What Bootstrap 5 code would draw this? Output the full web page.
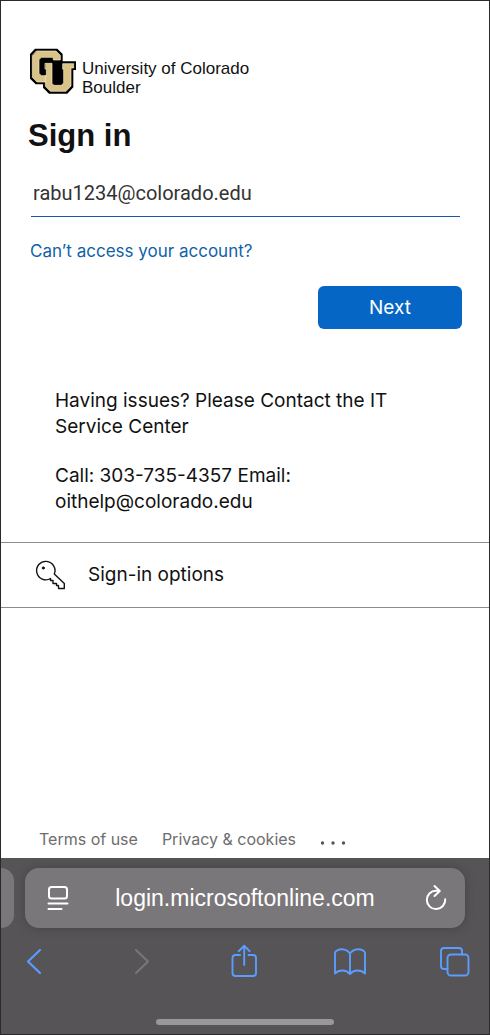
<!DOCTYPE html>
<html lang="en">
<head>
<meta charset="utf-8">
<meta name="viewport" content="width=device-width, initial-scale=1">
<title>Sign in</title>
<link href="https://cdn.jsdelivr.net/npm/bootstrap@5.3.0/dist/css/bootstrap.min.css" rel="stylesheet">
<style>
  body { font-family: Inter, Roboto, sans-serif; color: #111; background: #fff; }
  .phone { border: 1px solid #2b292b; }
  .signin { padding: 47px 27px 0 28px; }
  .brand-row { gap: 5px; }
  .brand-name { font: 17px/19px "Liberation Sans", Arial, sans-serif; padding-top: 11px; }
  h1 { font: bold 31px/36px "Liberation Sans", Arial, sans-serif; margin: 21px 0 0 -1px; }
  .user-field { font: 20px/24px Roboto, sans-serif; color: #333; border: 0; border-bottom: 1px solid #1a57a5; border-radius: 0; padding: 12px 2px 11px; margin: 15px 2px 0; width: calc(100% - 4px); }
  .recover { font-size: 17px; line-height: 24px; color: #0f62a8; margin: 22px 0 0 1px; }
  .next-btn { width: 144px; height: 43px; background: #0566c6; border: 0; border-radius: 6px; font-size: 19px; line-height: 24px; color: #fff; margin-top: 23px; }
  .next-btn:hover { background: #0459ad; }
  .help { font-size: 19px; line-height: 26px; padding: 59px 72px 0 54px; }
  .help p { margin: 0 0 23px; }
  .options { border: 0; border-top: 1px solid #8c8c8c; border-bottom: 1px solid #8c8c8c; border-radius: 0; font-size: 19px; line-height: 26px; color: #111; padding: 17px 34px; margin-top: 4px; gap: 22px; }
  .legal { font-size: 16px; line-height: 20px; color: #6d6d6d; padding: 0 38px 9px; gap: 24px; }
  .legal a { color: inherit; }
  .more { border: 0; background: none; padding: 0; color: #555; }
  .browser { background: #565456; padding: 10px 0 9px; }
  .tabs-row { gap: 11px; padding-right: 24px; }
  .tab-edge { width: 13px; height: 60px; background: #7a777a; border-radius: 0 14px 14px 0; }
  .address { height: 60px; background: #7a777a; border-radius: 14px; color: #fff; padding: 0 17px 0 21px; box-shadow: 0 0 8px #454346; }
  .address input { font: 23px/28px "Liberation Sans", Arial, sans-serif; color: #fff; background: none; border: 0; min-width: 0; text-align: center; outline: 0; padding: 0 4px 0 0; }
  .icon-btn { background: none; border: 0; padding: 0; line-height: 0; color: #5b9cff; }
  .icon-btn:disabled { color: #777579; }
  .address .icon-btn { color: #fff; }
  .toolbar { padding: 16px 18px 0; }
  .home-bar { width: 178px; height: 6px; border-radius: 3px; background: #9a979b; margin: 41px auto 0; }
  svg { fill: none; stroke: currentColor; stroke-linecap: round; stroke-linejoin: round; }
  .gold path { fill: #d9c386; stroke: #f4ebcd; stroke-width: 2; }
</style>
</head>
<body>
<div class="phone min-vh-100 d-flex flex-column">
  <main class="flex-grow-1 d-flex flex-column">
    <form class="signin">
      <div class="brand-row d-flex align-items-start">
        <svg width="48" height="48" viewBox="9 11 144 144" role="img" aria-label="CU Boulder logo" class="flex-shrink-0">
          <path fill="#000" stroke="none" d="M27 13H94L110 29V51H150V77H142V129L124 148H69L51 130V120H29L12 103V29Z"/>
          <g class="gold">
            <path d="M32 20H90L103 33V47H82V43L78 39H46L39 46V87L46 94H66V113H33L19 99V34Z"/>
            <path d="M58 57H78V118L84 123H106L113 116V75H110V58H143V71H135V125L120 141H73L58 126V94H61V74H58Z"/>
          </g>
        </svg>
        <div class="brand-name">University of Colorado<br>Boulder</div>
      </div>
      <h1>Sign in</h1>
      <input class="form-control shadow-none user-field" type="email" aria-label="Email" value="rabu1234@colorado.edu">
      <div class="recover"><a href="#" class="text-decoration-none text-reset">Can’t access your account?</a></div>
      <div class="d-flex justify-content-end"><button type="button" class="btn next-btn">Next</button></div>
    </form>
    <div class="help">
      <p>Having issues? Please Contact the IT Service Center</p>
      <p>Call: 303-735-4357 Email: oithelp@colorado.edu</p>
    </div>
    <button type="button" class="btn options w-100 d-flex align-items-center text-start">
      <svg width="31" height="30" viewBox="0 0 31 30" stroke-width="1.4" stroke-linejoin="miter" aria-hidden="true">
        <path d="M19.3 14.1A9.2 9.2 0 1 0 15.500 18.500V20.500H18V23.500H21.500V25.500H23.500V28.500H29.300V23.500Z"/><circle cx="8.300" cy="8" r="1.100" fill="currentColor" stroke-width="1"/>
      </svg>
      <span>Sign-in options</span>
    </button>
    <footer class="legal d-flex mt-auto">
      <a href="#" class="text-decoration-none">Terms of use</a>
      <a href="#" class="text-decoration-none">Privacy &amp; cookies</a>
      <button type="button" class="more" aria-label="More"><svg width="26" height="14" viewBox="0 0 26 14" aria-hidden="true"><g fill="currentColor" stroke="none"><circle cx="2.500" cy="9" r="1.700"/><circle cx="13" cy="9" r="1.700"/><circle cx="23.500" cy="9" r="1.700"/></g></svg></button>
    </footer>
  </main>
  <div class="browser">
    <div class="tabs-row d-flex">
      <div class="tab-edge flex-shrink-0"></div>
      <div class="address flex-grow-1 d-flex align-items-center">
        <button type="button" class="icon-btn" aria-label="Page menu"><svg width="24" height="28" viewBox="0 0 24 28" stroke-width="2"><rect x="3" y="3" width="18" height="11.500" rx="2.500"/><path d="M2.500 19.500H21.500M2.500 25H15.500"/></svg></button>
        <input class="flex-grow-1" aria-label="Address" value="login.microsoftonline.com">
        <button type="button" class="icon-btn" aria-label="Reload"><svg width="24" height="28" viewBox="0 0 24 28" stroke-width="2"><path d="M15.500 6.700H12A9.200 9.200 0 1 0 21.200 15.300M10.500 2L15.800 7L10.500 12"/></svg></button>
      </div>
    </div>
    <div class="toolbar d-flex justify-content-between align-items-center">
      <button type="button" class="icon-btn" aria-label="Back"><svg width="32" height="34" viewBox="0 0 32 34" stroke-width="2.200"><path d="M21 6L9 17.500L21 29"/></svg></button>
      <button type="button" class="icon-btn" aria-label="Forward" disabled><svg width="32" height="34" viewBox="0 0 32 34" stroke-width="2.200"><path d="M12 6L24 17.500L12 29"/></svg></button>
      <button type="button" class="icon-btn" aria-label="Share"><svg width="32" height="34" viewBox="0 0 32 34" stroke-width="1.900"><path d="M12 11H7.500Q4.500 11 4.500 14V29Q4.500 32 7.500 32H25Q28 32 28 29V14Q28 11 25 11H20.500M16.200 21V2M10.700 7.200L16.200 1.800L21.700 7.200"/></svg></button>
      <button type="button" class="icon-btn" aria-label="Bookmarks"><svg width="34" height="34" viewBox="0 0 34 34" stroke-width="1.900"><path d="M17 9.500C13 4 5 4 2 8.500V29.500C6 25.500 13 25.500 17 30C21 25.500 28 25.500 32 29.500V8.500C29 4 21 4 17 9.500V29.500"/></svg></button>
      <button type="button" class="icon-btn" aria-label="Tabs"><svg width="32" height="34" viewBox="0 0 32 34" stroke-width="1.900"><rect x="8.500" y="10.500" width="21" height="21" rx="3.500"/><path d="M8.500 25H5Q2 25 2 22V7Q2 4 5 4H20Q23 4 23 7V10.500"/></svg></button>
    </div>
    <div class="home-bar"></div>
  </div>
</div>
<script src="https://cdn.jsdelivr.net/npm/bootstrap@5.3.0/dist/js/bootstrap.bundle.min.js"></script>
</body>
</html>
